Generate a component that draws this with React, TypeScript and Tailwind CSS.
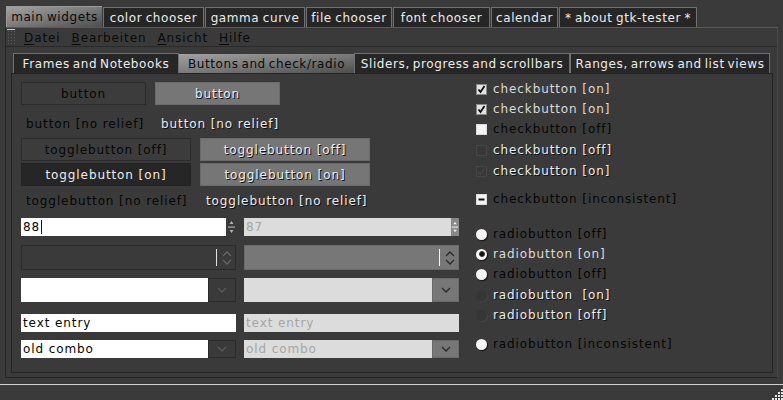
import React from "react";

const emboss = "text-[#ececec] [text-shadow:1px_1px_0_#111]";
const dark = "text-[#050505]";

const topTabs = [
  { label: "color chooser", w: "w-[101px]" },
  { label: "gamma curve", w: "w-[100px]" },
  { label: "file chooser", w: "w-[86px]" },
  { label: "font chooser", w: "w-[97px]" },
  { label: "calendar", w: "w-[67px]" },
  { label: "* about gtk-tester *", w: "w-[138px]" },
];

const innerTabs = [
  { label: "Frames and Notebooks", w: "w-[166px]", active: false },
  { label: "Buttons and check/radio", w: "w-[175px]", active: true },
  { label: "Sliders, progress and scrollbars", w: "w-[216px]", active: false },
  { label: "Ranges, arrows and list views", w: "w-[200px]", active: false },
];

function Chevron({ color, up = false }: { color: string; up?: boolean }) {
  return (
    <svg width="10" height="6" viewBox="0 0 10 6">
      <path
        d={up ? "M1 5 L5 1 L9 5" : "M1 1 L5 5 L9 1"}
        fill="none"
        stroke={color}
        strokeWidth="1.3"
      />
    </svg>
  );
}

function TinyArrows({ color }: { color: string }) {
  return (
    <svg width="9" height="18" viewBox="0 0 9 18">
      <path d="M4.5 3 L6.5 6 L2.5 6 Z" fill={color} />
      <rect x="1" y="8.5" width="7" height="1.2" fill={color} />
      <path d="M2.5 12 L6.5 12 L4.5 15 Z" fill={color} />
    </svg>
  );
}

type CheckKind = "on" | "off" | "ins-off" | "ins-on" | "mixed";

function CheckBox({ kind }: { kind: CheckKind }) {
  if (kind === "ins-off" || kind === "ins-on") {
    return (
      <svg width="11" height="11" viewBox="0 0 11 11">
        <rect x="0.5" y="0.5" width="10" height="10" fill="#383838" stroke="#474747" />
        {kind === "ins-on" && <path d="M2.5 6 L4.5 8 L8.5 3" fill="none" stroke="#474747" strokeWidth="1.2" />}
      </svg>
    );
  }
  return (
    <svg width="11" height="11" viewBox="0 0 11 11">
      <rect x="0.5" y="0.5" width="10" height="10" fill={kind === "on" ? "#e2e2e2" : "#f4f4f4"} stroke={kind === "on" ? "#8a8a8a" : "#dcdcdc"} />
      {kind === "on" && <path d="M2.5 5.5 L4.5 8 L8.5 2" fill="none" stroke="#111" strokeWidth="1.8" />}
      {kind === "mixed" && <rect x="2.5" y="4.5" width="6" height="2" fill="#111" />}
    </svg>
  );
}

type RadioKind = "on" | "off" | "ins";

function Radio({ kind }: { kind: RadioKind }) {
  if (kind === "ins") {
    return <div className="w-[11px] h-[11px] rounded-full bg-[#363636] shadow-[1px_1px_0_#444]" />;
  }
  return (
    <div className="w-[11px] h-[11px] rounded-full bg-[#f6f6f6] shadow-[1px_1px_1px_#151515] flex items-center justify-center">
      {kind === "on" && <div className="w-[6px] h-[6px] rounded-full bg-[#111] border border-[#333]" />}
    </div>
  );
}

const checks: { kind: CheckKind; label: string; text: string; mt: string }[] = [
  { kind: "on", label: "checkbutton [on]", text: "text-[#dadada]", mt: "mt-[5px]" },
  { kind: "on", label: "checkbutton [on]", text: "text-[#dadada]", mt: "mt-[0px]" },
  { kind: "off", label: "checkbutton [off]", text: dark, mt: "mt-[0px]" },
  { kind: "ins-off", label: "checkbutton [off]", text: emboss, mt: "mt-[1px]" },
  { kind: "ins-on", label: "checkbutton [on]", text: emboss, mt: "mt-[1px]" },
  { kind: "mixed", label: "checkbutton [inconsistent]", text: dark, mt: "mt-[8px]" },
];

const radios: { kind: RadioKind; label: string; text: string; mt: string }[] = [
  { kind: "off", label: "radiobutton [off]", text: dark, mt: "mt-[15px]" },
  { kind: "on", label: "radiobutton [on]", text: "text-[#dadada]", mt: "mt-[0px]" },
  { kind: "off", label: "radiobutton [off]", text: dark, mt: "mt-[0px]" },
  { kind: "ins", label: "radiobutton  [on]", text: emboss, mt: "mt-[1px]" },
  { kind: "ins", label: "radiobutton [off]", text: emboss, mt: "mt-[0px]" },
  { kind: "off", label: "radiobutton [inconsistent]", text: dark, mt: "mt-[9px]" },
];

export default function App() {
  return (
    <div className="w-[783px] h-[400px] bg-[#3a3a3a] flex flex-col overflow-hidden font-['DejaVu_Sans',sans-serif] text-[12px] tracking-[0.9px] whitespace-pre">
      {/* Top notebook tabs */}
      <div className="flex items-end pl-[6px] pt-[6px] h-[27px] tracking-[0.6px] [word-spacing:-1px]">
        <div className="w-[96px] h-[21px] flex items-center justify-center bg-linear-to-br from-[#a2a2a2] via-[#7a7a7a] to-[#4e4e4e] text-[#0a0a0a] border-t border-l border-[#9a9a9a]">
          main widgets
        </div>
        {topTabs.map((t) => (
          <div
            key={t.label}
            className={`${t.w} h-[20px] ml-[1px] flex items-center justify-center bg-[#262626] text-[#ececec] border border-b-0 border-[#707070]`}
          >
            {t.label}
          </div>
        ))}
      </div>

      {/* Outer notebook page */}
      <div className="ml-[5px] w-[773px] h-[351px] border border-[#252525] border-t-[#5a5a5a] border-r-[#4a4a4a] flex flex-col">
        {/* Menu bar */}
        <div className="h-[19px] flex items-center border-b border-[#2a2a2a] text-[#0a0a0a]">
          <div className="ml-[1px] w-[8px] h-[16px] border-t border-[#cfcfcf] bg-[radial-gradient(#5a5a5a_1px,transparent_1px)] bg-[length:3px_3px]" />
          <div className="flex ml-[9px] gap-[11px] pt-[1px]">
            {["Datei", "Bearbeiten", "Ansicht", "Hilfe"].map((m) => (
              <span key={m}>
                <span className="underline underline-offset-2">{m[0]}</span>
                {m.slice(1)}
              </span>
            ))}
          </div>
        </div>

        {/* Inner notebook */}
        <div className="mt-[6px] ml-[5px] flex flex-col">
          <div className="flex items-end pl-[2px] h-[20px] tracking-[0.6px] [word-spacing:-1.5px]">
            {innerTabs.map((t) =>
              t.active ? (
                <div
                  key={t.label}
                  className={`${t.w} h-[19px] flex items-center justify-center bg-linear-to-br from-[#a2a2a2] via-[#7a7a7a] to-[#4e4e4e] text-[#0a0a0a]`}
                >
                  {t.label}
                </div>
              ) : (
                <div
                  key={t.label}
                  className={`${t.w} h-[20px] flex items-center justify-center bg-[#262626] text-[#ececec] border border-b-0 border-[#707070]`}
                >
                  {t.label}
                </div>
              )
            )}
          </div>

          <div className="w-[762px] h-[300px] border border-[#252525] flex">
            {/* Left widgets */}
            <div className="w-[448px] pl-[9px] pt-[8px] flex flex-col">
              {/* buttons */}
              <div className="flex gap-[9px] h-[23px]">
                <div className={`w-[125px] flex items-center justify-center bg-[#3c3c3c] border border-[#2b2b2b] ${dark}`}>button</div>
                <div className={`w-[125px] flex items-center justify-center bg-[#767676] border border-[#6a6a6a] ${emboss}`}>button</div>
              </div>
              <div className="flex h-[20px] mt-[9px] items-center">
                <div className={`w-[140px] pl-[5px] ${dark}`}>button [no relief]</div>
                <div className={emboss}>button [no relief]</div>
              </div>
              <div className="flex gap-[9px] h-[23px] mt-[4px]">
                <div className={`w-[170px] flex items-center justify-center bg-[#3c3c3c] border border-[#2b2b2b] ${dark}`}>togglebutton [off]</div>
                <div className={`w-[170px] flex items-center justify-center bg-[#767676] border border-[#6a6a6a] ${emboss}`}>togglebutton [off]</div>
              </div>
              <div className="flex gap-[9px] h-[23px] mt-[2px]">
                <div className="w-[170px] flex items-center justify-center bg-[#262626] border border-[#222] text-[#ececec]">togglebutton [on]</div>
                <div className={`w-[170px] flex items-center justify-center bg-[#767676] border border-[#6a6a6a] ${emboss}`}>togglebutton [on]</div>
              </div>
              <div className="flex h-[20px] mt-[5px] items-center">
                <div className={`w-[185px] pl-[5px] ${dark}`}>togglebutton [no relief]</div>
                <div className={emboss}>togglebutton [no relief]</div>
              </div>

              {/* spin buttons */}
              <div className="flex gap-[8px] h-[18px] mt-[7px]">
                <div className="w-[215px] flex">
                  <div className="flex-1 bg-white text-[#050505] pl-[2px] flex items-center">
                    88<span className="w-[1px] h-[14px] bg-[#111] ml-[1px]" />
                  </div>
                  <div className="w-[10px] flex items-center justify-center bg-[#3a3a3a]">
                    <TinyArrows color="#b0b0b0" />
                  </div>
                </div>
                <div className="w-[215px] flex">
                  <div className="flex-1 bg-[#dcdcdc] text-[#a6a6a6] pl-[2px] flex items-center">87</div>
                  <div className="w-[8px] flex items-center justify-center bg-[#888]">
                    <TinyArrows color="#efefef" />
                  </div>
                </div>
              </div>
              <div className="flex gap-[8px] h-[25px] mt-[9px]">
                <div className="w-[215px] flex items-center justify-end border border-[#2a2a2a] bg-[#3a3a3a] pr-[3px]">
                  <span className="w-[1px] h-[17px] bg-[#e0e0e0]" />
                  <div className="ml-[5px] flex flex-col gap-[2px]">
                    <Chevron color="#666" up />
                    <Chevron color="#666" />
                  </div>
                </div>
                <div className="w-[215px] flex items-center justify-end border border-[#6a6a6a] bg-[#777] pr-[3px]">
                  <span className="w-[1px] h-[17px] bg-[#f4f4f4]" />
                  <div className="ml-[5px] flex flex-col gap-[2px]">
                    <Chevron color="#2a2a2a" up />
                    <Chevron color="#2a2a2a" />
                  </div>
                </div>
              </div>

              {/* combo with entry */}
              <div className="flex gap-[8px] h-[24px] mt-[8px]">
                <div className="w-[215px] flex">
                  <div className="flex-1 bg-white" />
                  <div className="w-[28px] flex items-center justify-center bg-[#3a3a3a] border border-[#2a2a2a]">
                    <Chevron color="#5a5a5a" />
                  </div>
                </div>
                <div className="w-[215px] flex">
                  <div className="flex-1 bg-[#dcdcdc]" />
                  <div className="w-[27px] flex items-center justify-center bg-[#777] border border-[#6a6a6a]">
                    <Chevron color="#2a2a2a" />
                  </div>
                </div>
              </div>

              {/* text entry */}
              <div className="flex gap-[8px] h-[18px] mt-[12px]">
                <div className="w-[215px] bg-white text-[#050505] pl-[2px] flex items-center">text entry</div>
                <div className="w-[215px] bg-[#dcdcdc] text-[#a6a6a6] pl-[2px] flex items-center">text entry</div>
              </div>

              {/* old combo */}
              <div className="flex gap-[8px] h-[18px] mt-[8px]">
                <div className="w-[215px] flex">
                  <div className="flex-1 bg-white text-[#050505] pl-[2px] flex items-center">old combo</div>
                  <div className="w-[28px] flex items-center justify-center bg-[#3a3a3a] border border-[#2a2a2a]">
                    <Chevron color="#5a5a5a" />
                  </div>
                </div>
                <div className="w-[215px] flex">
                  <div className="flex-1 bg-[#dcdcdc] text-[#a6a6a6] pl-[2px] flex items-center">old combo</div>
                  <div className="w-[27px] flex items-center justify-center bg-[#777] border border-[#6a6a6a]">
                    <Chevron color="#2a2a2a" />
                  </div>
                </div>
              </div>
            </div>

            {/* Right column: check and radio buttons */}
            <div className="ml-[16px] flex flex-col">
              {checks.map((c, i) => (
                <div key={i} className={`flex items-center h-[20px] ${c.mt}`}>
                  <CheckBox kind={c.kind} />
                  <span className={`ml-[6px] ${c.text}`}>{c.label}</span>
                </div>
              ))}
              {radios.map((r, i) => (
                <div key={i} className={`flex items-center h-[20px] ${r.mt}`}>
                  <Radio kind={r.kind} />
                  <span className={`ml-[6px] ${r.text}`}>{r.label}</span>
                </div>
              ))}
            </div>
          </div>
        </div>
      </div>

      {/* Status strip */}
      <div className="mt-[6px] h-[1px] bg-[#d0d0d0]" />
      <div className="flex-1 flex justify-end items-end">
        <svg width="13" height="13" viewBox="0 0 13 13">
          {[
            [11, 2], [8, 5], [11, 5], [5, 8], [8, 8], [11, 8], [2, 11], [5, 11], [8, 11], [11, 11],
          ].map(([x, y], i) => (
            <rect key={i} x={x} y={y} width="2" height="2" fill="#e8e8e8" />
          ))}
        </svg>
      </div>
    </div>
  );
}
